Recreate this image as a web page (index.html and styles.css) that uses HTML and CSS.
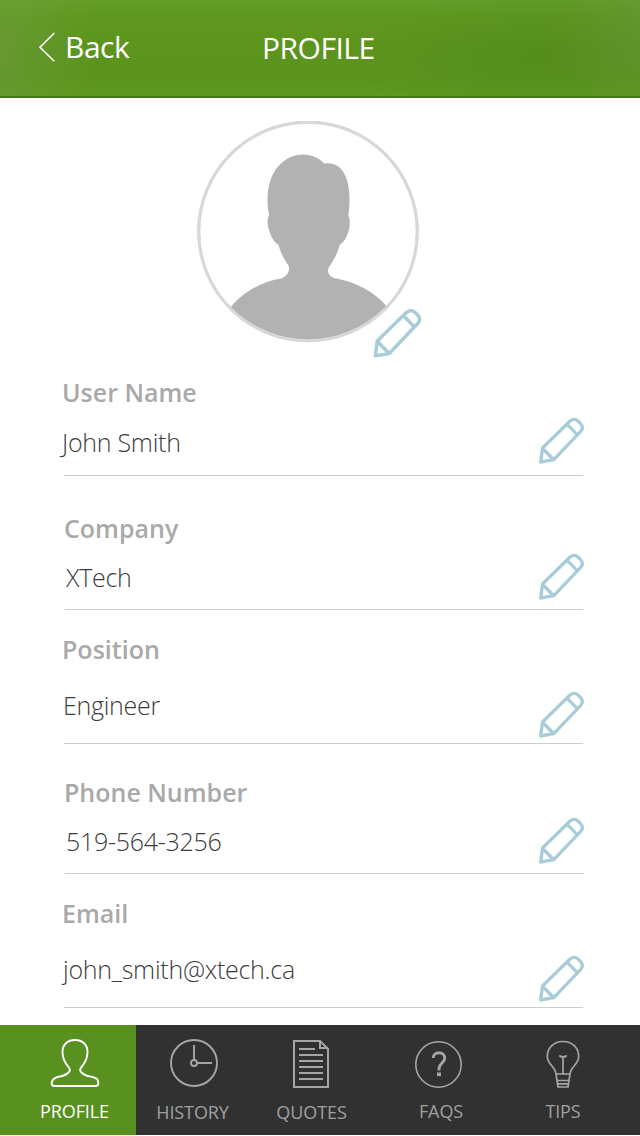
FILE: index.html
```html
<!DOCTYPE html>
<html lang="en">
<head>
<meta charset="utf-8">
<title>Profile</title>
<link rel="stylesheet" href="styles.css">
</head>
<body>
<svg class="defs" aria-hidden="true">
  <symbol id="pencil" viewBox="0 0 46 47">
    <g fill="none" stroke="#a9cdd8" stroke-width="3.3" stroke-linejoin="round">
      <path d="M1.7 45 L3.5 31 L30.8 4.300 Q35 .5 39.2 4.300 L41.3 6.300 Q45.5 10.6 41.3 14.9 L14.8 42.7 Z"/>
      <path d="M3.7 31.5 L14.5 42.5 M28.2 7.3 L38.5 17.8"/>
    </g>
  </symbol>
</svg>
<div class="screen">
  <header class="header">
    <a class="back"><svg width="18" height="30" viewBox="0 0 18 30"><path d="M16.3 1 L2 15.2 L16.3 29.3" fill="none" stroke="#fff" stroke-width="1.6"/></svg><span class="back-text">Back</span></a>
    <h1 class="title">PROFILE</h1>
  </header>

  <main class="content">
    <div class="avatar">
      <svg width="222" height="222" viewBox="0 0 222 222">
        <clipPath id="disc"><circle cx="111" cy="110.5" r="108.5"/></clipPath>
        <circle cx="111" cy="110.5" r="109.3" fill="#fff" stroke="#d8d8d8" stroke-width="3"/>
        <path clip-path="url(#disc)" fill="#b2b2b2" d="M106 33.5 C115 33.5 122 37 127 42.5 C144 39.5 152.500 55 152.500 78 C152.500 84 152 90 151.300 94.500 C154 99 153 109 149.500 115.500 C147.500 120 145 122.500 142.800 123.500 C140.500 133 136.500 139.500 132 146 C129.500 151 132 155.500 138 157.300 C160 161 178 172 189 184.500 L196 195 L150 225 L75 225 L26 195 L35 184.500 C45 173 63 160.500 85 157.300 C91 155 93 149 91.800 145 C87 138 83.500 132 81.500 123.500 C78 122.500 74 116 72 109 C70 103 70 97 72.300 94.500 C69.500 84 70 71 73 61 C77.500 45 90.500 33.500 106 33.500 Z"/>
        <circle cx="111" cy="110.5" r="109.3" fill="none" stroke="#d8d8d8" stroke-width="3"/>
      </svg>
      <svg class="avatar-edit" width="50" height="50"><use href="#pencil"/></svg>
    </div>

    <section class="field field-name">
      <div class="label">User Name</div><div class="value">John Smith</div>
      <svg class="edit"><use href="#pencil"/></svg>
    </section>
    <section class="field field-company">
      <div class="label">Company</div><div class="value">XTech</div>
      <svg class="edit"><use href="#pencil"/></svg>
    </section>
    <section class="field field-position">
      <div class="label">Position</div><div class="value">Engineer</div>
      <svg class="edit"><use href="#pencil"/></svg>
    </section>
    <section class="field field-phone">
      <div class="label">Phone Number</div><div class="value">519-564-3256</div>
      <svg class="edit"><use href="#pencil"/></svg>
    </section>
    <section class="field field-email">
      <div class="label">Email</div><div class="value">john_smith@xtech.ca</div>
      <svg class="edit"><use href="#pencil"/></svg>
    </section>
  </main>

  <nav class="tabs">
    <a class="tab tab-profile">
      <svg width="50" height="50" viewBox="0 0 50 50" fill="none" stroke="#fff" stroke-width="1.9" stroke-linejoin="round"><path d="M25 2 C32.500 2 37.500 6.500 37.500 14 C37.500 21 35 25 31.500 29 Q28.800 32.200 31.500 34.500 C35 38 39 38.200 42.500 39 C47.500 40.500 48.300 42 48.300 45 Q48.500 48 45.500 48 L4.500 48 Q1.500 48 1.700 45 C1.700 42 3 40.500 7.500 39 C11 38.200 15 38 18.500 34.500 Q21.200 32.200 18.500 29 C15 25 12.500 21 12.500 14 C12.500 6.500 17.500 2 25 2 Z"/></svg>
      <span class="tab-text">PROFILE</span>
    </a>
    <a class="tab tab-history">
      <svg width="50" height="50" viewBox="0 0 50 50" fill="none" stroke="#a6a6a6" stroke-width="1.9"><circle cx="25" cy="25" r="23"/><circle cx="25" cy="25" r="3"/><path d="M25 7 V22 M28 25 H43"/></svg>
      <span class="tab-text">HISTORY</span>
    </a>
    <a class="tab tab-quotes">
      <svg width="50" height="50" viewBox="0 0 50 50" fill="none" stroke="#a6a6a6" stroke-width="2"><path d="M7 3 H33 L41 11 V49 H7 Z M33 3 V10 H41 M12 11 H28 M12 17 H36 M12 23 H36 M12 29 H36 M12 35 H36 M12 41 H36"/></svg>
      <span class="tab-text">QUOTES</span>
    </a>
    <a class="tab tab-faqs">
      <svg width="50" height="50" viewBox="0 0 50 50" fill="none" stroke="#a6a6a6"><circle cx="23.500" cy="26.500" r="22.700" stroke-width="1.600"/><path d="M18.200 20 C18.200 13 29.800 13 29.800 20 C29.800 25 24 25 24 30.500 V32.500" stroke-width="2.900"/><path d="M22 36.300 H26" stroke-width="3.600"/></svg>
      <span class="tab-text">FAQS</span>
    </a>
    <a class="tab tab-tips">
      <svg width="50" height="50" viewBox="0 0 50 50" fill="none" stroke="#a6a6a6" stroke-width="1.700"><path d="M18 36 C17.500 28.500 9.300 26.500 9.300 18.500 C9.300 9.500 16 3.500 25 3.500 C34 3.500 40.700 9.500 40.700 18.500 C40.700 26.500 32.500 28.500 32 36 L30 49 H20 Z M18 36 H32 M19.200 42.500 H31 M20 45.800 H30.500 M25 35.500 V19 M21.300 17.500 Q23.500 19.500 25 18.500 Q26.500 19.500 28.700 17.500"/></svg>
      <span class="tab-text">TIPS</span>
    </a>
  </nav>
</div>
</body>
</html>
```
FILE: styles.css
```css
* { box-sizing: border-box; }
body { margin: 0; background: #fff; font-family: "Open Sans", "Noto Sans", sans-serif; }
.defs { display: none; }
.screen { width: 640px; height: 1136px; display: flex; flex-direction: column; overflow: hidden; }

.header {
  height: 98px; flex: none; display: grid; grid-template-columns: 262px 1fr;
  align-items: start; color: #fff; border-bottom: 2px solid #447a13;
  background:
    radial-gradient(ellipse 90px 130px at 0 50%, rgba(120, 160, 80, .4), transparent),
    radial-gradient(ellipse 90px 110px at 100% 30%, rgba(105, 150, 70, .35), transparent),
    radial-gradient(ellipse 180px 80px at 540px 60%, rgba(80, 137, 28, .6), transparent),
    linear-gradient(#659e29, #5f981f 20%, #5c941d 50%, #5b941d 80%, #5f991f);
}
.back { display: flex; padding: 32px 0 0 38px; }
.back-text { font-size: 30px; line-height: 40px; margin: -5px 0 0 9px; letter-spacing: -.5px; }
.title { margin: 28px 0 0; font-size: 30px; line-height: 40px; font-weight: 400; letter-spacing: -.5px; }

.content { height: 927px; flex: none; }
.avatar { position: relative; width: 222px; height: 256px; margin: 0 0 0 197px; padding-top: 23px; }
.avatar-edit { position: absolute; left: 176px; top: 210px; }

.field {
  display: grid; grid-template-columns: 1fr 46px; grid-template-rows: 34px 34px;
  width: 519px; margin-left: 64px; border-bottom: 1px solid #cdcdcd; align-content: start;
}
.label { grid-column: 1; grid-row: 1; font-size: 25px; line-height: 34px; font-weight: 600; color: #a9a9a9; white-space: nowrap; }
.value { grid-column: 1; grid-row: 2; font-size: 25px; line-height: 34px; font-weight: 300; color: #3c3c3c; white-space: nowrap; letter-spacing: -.27px; }
.edit { grid-column: 2; grid-row: 2; width: 46px; height: 47px; margin-left: 2px; }

.field-name { height: 122px; padding-top: 21px; row-gap: 16px; }
.field-name .label { margin-left: -2px; }
.field-name .value { margin-left: -2px; }
.field-name .edit { margin-top: -8px; }
.field-company { width: 518px; margin-left: 65px; height: 134px; padding-top: 35px; row-gap: 15px; }
.field-company .label { margin-left: -1px; }
.field-company .value { margin-left: 1px; }
.field-company .edit { margin-top: -7px; }
.field-position { height: 134px; padding-top: 22px; row-gap: 22px; }
.field-position .label { margin-left: -2px; }
.field-position .value { margin-left: -1px; }
.field-position .edit { margin-top: 3px; }
.field-phone { margin-left: 65px; height: 130px; padding-top: 31px; row-gap: 15px; }
.field-phone .label { margin-left: -1px; }
.field-phone .value { margin-left: 1px; }
.field-phone .edit { margin-left: 1px; margin-top: -7px; }
.field-email { height: 134px; padding-top: 22px; row-gap: 22px; }
.field-email .label { margin-left: -2px; }
.field-email .value { margin-left: -1px; }
.field-email .edit { margin-top: 3px; }

.tabs { flex: none; height: 110px; display: grid; grid-template-columns: 136px 116px 119px 138px 131px; background: #313131; }
.tab { display: flex; flex-direction: column; align-items: center; padding-top: 13px; color: #a0a0a0; font-size: 18px; line-height: 24px; letter-spacing: -.1px; }
.tab-text { margin-top: 11px; }
.tab-profile { background: #589120; color: #fff; padding-left: 13px; }
.tab-history .tab-text { margin-left: -3px; margin-top: 12px; }
.tab-quotes .tab-text { margin-top: 12px; }
.tab-faqs .tab-text { margin-left: 2px; }
.tab-tips { padding-right: 23px; }
```
